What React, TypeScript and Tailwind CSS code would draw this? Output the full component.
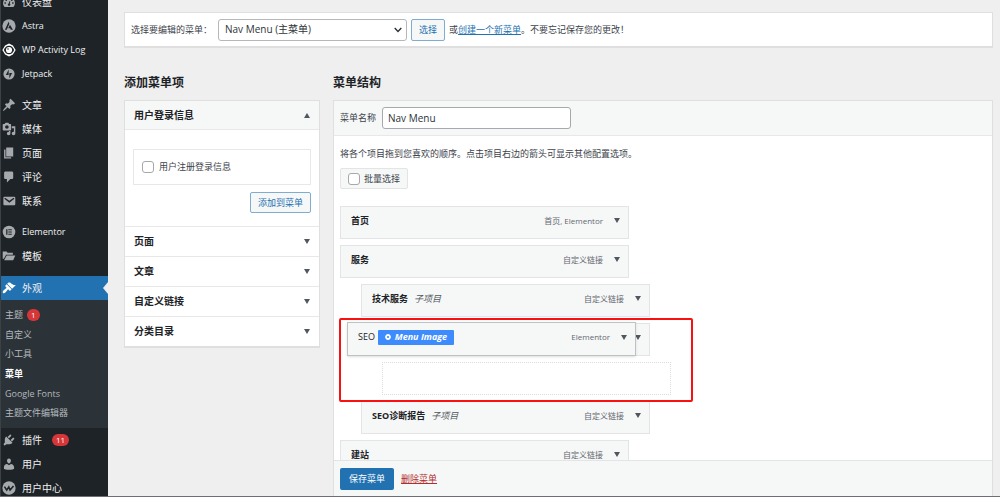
import { ReactNode } from "react";

interface INavItem {
    label: string;
    icon: ReactNode;
    badge?: number;
    active?: boolean;
}

interface IMenuItem {
    title: string;
    type: string;
    sub?: boolean;
}

const Icon = ({ d, children }: { d?: string; children?: ReactNode }) => (
    <svg viewBox="0 0 20 20" className="h-[14px] w-[14px] shrink-0" fill="currentColor" aria-hidden="true">
        {d && <path fillRule="evenodd" d={d} />}
        {children}
    </svg>
);

const icons = {
    dashboard: (
        <Icon d="M3.8 17h12.4c.3 0 .6-.2.7-.4A8.5 8.5 0 1 0 3.1 16.6c.1.2.4.4.7.4zM9 4.5h2v2H9zM5 6.5h2v2H5zM13 6.5h2v2h-2zM3.5 10.5h2v2h-2zM14.5 10.5h2v2h-2zM10.8 8.5l1 .3-.6 3.6a1.7 1.7 0 1 1-1.6-.3z" />
    ),
    astra: (
        <Icon>
            <circle cx="10" cy="10" r="9.5" />
            <path fill="#1d2327" d="M9.4 3.8L4.2 15.2h2.6l3.7-8.4zM11.4 8.2l-2.5 5h2.7l.9 2h3.1z" />
        </Icon>
    ),
    activity: (
        <Icon>
            <path fill="#fff" d="M10 .8l5.6 2.8 3.9 6.4-3.9 6.4L10 19.2l-5.6-2.8L.5 10l3.9-6.4z" />
            <path fill="#1d2327" d="M10 3.8c3.4 0 5.8 2.200 7.400 6.200-1.600 4-4 6.200-7.400 6.200S4.200 14 2.600 10C4.200 6 6.600 3.800 10 3.800z" />
            <circle cx="10" cy="10" r="4.400" fill="#fff" />
            <circle cx="8.600" cy="8.500" r="1.100" fill="#1d2327" />
        </Icon>
    ),
    jetpack: (
        <Icon>
            <circle cx="10" cy="10" r="8" />
            <path fill="#1d2327" d="M9.500 3.600v7.700H5.600zM10.500 16.400V8.700h3.900z" />
        </Icon>
    ),
    post: (
        <Icon d="M10.440 3.020l1.820-1.820 6.360 6.350-1.830 1.820c-1.050-.680-2.480-.570-3.410.360l-.750.750c-.920.930-1.040 2.350-.350 3.410l-1.830 1.820-2.410-2.410-2.800 2.790c-.420.420-3.380 2.710-3.800 2.290s1.860-3.390 2.280-3.810l2.790-2.790L4.100 9.360l1.830-1.820c1.050.690 2.480.570 3.400-.360l.750-.750c.930-.920 1.050-2.350.360-3.410z" />
    ),
    media: (
        <Icon d="M13 11V4c0-.55-.45-1-1-1h-1.670L9 1H5L3.670 3H2c-.55 0-1 .45-1 1v7c0 .55.45 1 1 1h10c.55 0 1-.45 1-1zM7 4.500c1.380 0 2.500 1.120 2.500 2.500S8.380 9.500 7 9.500 4.500 8.380 4.500 7 5.620 4.500 7 4.500zM14 6h5v10.500c0 1.380-1.120 2.500-2.500 2.500S14 17.880 14 16.500s1.120-2.500 2.500-2.500c.17 0 .34.02.5.05V9h-3V6zm-4 8.050V13h2v3.500c0 1.380-1.120 2.500-2.500 2.500S7 17.880 7 16.500 8.120 14 9.500 14c.17 0 .34.02.5.05z" />
    ),
    page: <Icon d="M6 15V2h10v13H6zm-1 1h8v2H3V5h2v11z" />,
    comments: <Icon d="M5 2h9c1.100 0 2 .9 2 2v7c0 1.100-.9 2-2 2h-2l-5 5v-5H5c-1.100 0-2-.9-2-2V4c0-1.100.9-2 2-2z" />,
    email: (
        <Icon d="M3.870 4h13.250C18.370 4 19 4.590 19 5.790v8.420c0 1.190-.63 1.790-1.880 1.790H3.870c-1.250 0-1.880-.6-1.880-1.790V5.790c0-1.200.63-1.790 1.880-1.790zm6.620 8.600l6.740-5.530c.24-.2.43-.66.13-1.070-.29-.41-.82-.42-1.170-.17l-5.700 3.860L4.800 5.830c-.35-.25-.88-.24-1.170.17-.3.41-.11.87.13 1.070z" />
    ),
    elementor: (
        <Icon>
            <circle cx="10" cy="10" r="9" />
            <path fill="#1d2327" d="M6 6h1.800v8H6zM9 6h5v1.600H9zM9 9.200h5v1.600H9zM9 12.400h5V14H9z" />
        </Icon>
    ),
    folder: <Icon d="M1 3.500h5.500L8 5.500h7.500v2.700H5.800L2.700 14H1zM6.600 9.300H19L16 16H3z" />,
    appearance: (
        <Icon d="M14.480 11.060L7.410 3.990l1.500-1.500c.5-.56 2.300-.47 3.510.32 1.210.8 1.430 1.280 2.910 2.100 1.180.64 2.450 1.260 4.450.85zm-.71.71L6.700 4.700 4.930 6.470c-.39.39-.39 1.020 0 1.410l1.060 1.060c.39.39.39 1.030 0 1.420-.6.6-1.430 1.110-2.210 1.690-.35.26-.7.53-1.010.84C1.430 14.230.4 16.080 1.400 17.070c.99 1 2.840-.03 4.180-1.360.31-.31.58-.66.85-1.020.57-.78 1.080-1.610 1.690-2.210.39-.39 1.020-.39 1.410 0l1.060 1.060c.39.39 1.020.39 1.410 0z" />
    ),
    plugins: (
        <Icon d="M13.110 4.360L9.870 7.600 8 5.730l3.240-3.240c.35-.34 1.050-.2 1.560.32.52.51.66 1.210.31 1.550zm-8 1.770l.91-1.120 9.010 9.010-1.190.84c-.71.71-2.630 1.160-3.820 1.160H6.140L4.900 17.260c-.59.59-1.540.59-2.120 0-.59-.58-.59-1.530 0-2.120l1.240-1.240v-3.880c0-1.130.4-3.190 1.090-3.890zm7.260 3.970l3.240-3.240c.34-.35 1.040-.21 1.550.31.52.51.66 1.210.31 1.550l-3.240 3.250z" />
    ),
    users: (
        <Icon d="M10 9.250c-2.270 0-2.730-3.440-2.730-3.440C7 4.020 7.820 2 9.970 2c2.160 0 2.980 2.020 2.710 3.810 0 0-.41 3.440-2.680 3.440zm0 2.570L12.720 10c2.390 0 4.520 2.330 4.520 4.530v2.490s-3.650 1.130-7.240 1.130c-3.650 0-7.240-1.130-7.240-1.130v-2.490c0-2.250 1.940-4.480 4.470-4.480z" />
    ),
    member: (
        <Icon>
            <circle cx="10" cy="10" r="9.500" />
            <path fill="none" stroke="#1d2327" strokeWidth="2.200" d="M3.500 8l3.200 5 3-4.500 1.800 4.500L16.500 7" />
        </Icon>
    ),
};

const navGroups: INavItem[][] = [
    [
        { label: "仪表盘", icon: icons.dashboard },
        { label: "Astra", icon: icons.astra },
        { label: "WP Activity Log", icon: icons.activity },
        { label: "Jetpack", icon: icons.jetpack },
    ],
    [
        { label: "文章", icon: icons.post },
        { label: "媒体", icon: icons.media },
        { label: "页面", icon: icons.page },
        { label: "评论", icon: icons.comments },
        { label: "联系", icon: icons.email },
    ],
    [
        { label: "Elementor", icon: icons.elementor },
        { label: "模板", icon: icons.folder },
    ],
];

const bottomNav: INavItem[] = [
    { label: "插件", icon: icons.plugins, badge: 11 },
    { label: "用户", icon: icons.users },
    { label: "用户中心", icon: icons.member },
];

const subNav = ["主题", "自定义", "小工具", "菜单", "Google Fonts", "主题文件编辑器"];

const closedPanels = ["页面", "文章", "自定义链接", "分类目录"];

const Badge = ({ count }: { count: number }) => (
    <span className="ml-1 flex h-3 min-w-3 items-center justify-center rounded-full bg-[#d63638] px-1 text-[8px] leading-none text-white">
        {count}
    </span>
);

const Arrow = ({ up }: { up?: boolean }) => (
    <svg viewBox="0 0 6 5" className="h-[5px] w-[6px] shrink-0" fill="#50575e" aria-hidden="true">
        <path d={up ? "M3 0l3 5H0z" : "M0 0h6L3 5z"} />
    </svg>
);

const NavLink = ({ item }: { item: INavItem }) => (
    <li className={item.active ? "relative bg-[#2271b1]" : ""}>
        <a href="#" className="flex h-6 items-center gap-[6px] pl-[1px] text-[#f0f0f1]">
            <span className={item.active ? "text-white" : "text-[#a7aaad]"}>{item.icon}</span>
            <span className={/^[A-Z]/.test(item.label) ? "text-[9px]" : "text-[10px]"}>{item.label}</span>
            {item.badge && <Badge count={item.badge} />}
        </a>
        {item.active && (
            <span className="absolute top-[6px] right-0 border-y-[6px] border-r-[5px] border-y-transparent border-r-[#efefef]" />
        )}
    </li>
);

function Sidebar() {
    return (
        <nav className="w-[108px] shrink-0 overflow-hidden border-l border-[#3c4146] bg-[#1d2327]">
            {/* scrolled a little, first row is cut */}
            <div className="-mt-[10px]">
                {navGroups.map((group, i) => (
                    <ul key={i} className="mb-[7px]">
                        {group.map((item) => (
                            <NavLink key={item.label} item={item} />
                        ))}
                    </ul>
                ))}
                <ul className="mt-2">
                    <NavLink item={{ label: "外观", icon: icons.appearance, active: true }} />
                </ul>
                <ul className="flex h-32 flex-col bg-[#2c3338] py-[5px]">
                    {subNav.map((label) => (
                        <li key={label} className="flex flex-1 items-center">
                            <a
                                href="#"
                                className={
                                    label === "菜单"
                                        ? "flex items-center pl-1 font-bold text-white"
                                        : "flex items-center pl-1 text-[#b4b9be]"
                                }
                            >
                                {label}
                                {label === "主题" && <Badge count={1} />}
                            </a>
                        </li>
                    ))}
                </ul>
                <ul>
                    {bottomNav.map((item) => (
                        <NavLink key={item.label} item={item} />
                    ))}
                </ul>
            </div>
        </nav>
    );
}

function MenuSelect() {
    return (
        <form className="flex h-9 items-center border border-b-2 border-[#dfdfe0] bg-white px-[6px]">
            <label htmlFor="menu" className="mr-[6px]">
                选择要编辑的菜单：
            </label>
            <div className="relative">
                <select
                    id="menu"
                    className="h-[22px] w-[189px] appearance-none rounded-[3px] border border-[#b5b7ba] bg-white px-[6px] text-[10px] text-[#2c3338]"
                >
                    <option>Nav Menu (主菜单)</option>
                </select>
                <svg
                    viewBox="0 0 8 6"
                    className="pointer-events-none absolute top-2 right-[5px] h-[6px] w-2"
                    fill="none"
                    stroke="#2c3338"
                    strokeWidth="1.400"
                    aria-hidden="true"
                >
                    <path d="M.7 1L4 4.500 7.300 1" />
                </svg>
            </div>
            <button
                type="button"
                className="mx-1 h-[22px] rounded-[2px] border border-[#7fadd2] bg-[#f6f7f7] px-[7px] text-[#2271b1]"
            >
                选择
            </button>
            <span>
                或
                <a href="#" className="text-[#2271b1] underline">
                    创建一个新菜单
                </a>
                。不要忘记保存您的更改！
            </span>
        </form>
    );
}

function AddItems() {
    return (
        <section className="w-[196px] shrink-0">
            <h2 className="mb-2 text-[12px] leading-[18px] font-bold text-[#1d2327]">添加菜单项</h2>
            <div className="border border-b-2 border-[#dfdfe0] bg-white">
                <button
                    type="button"
                    className="flex h-[29px] w-full items-center justify-between border-b border-[#e8e8e9] bg-[#f6f7f7] px-[9px] text-[10px] font-bold text-[#1d2327]"
                >
                    用户登录信息
                    <Arrow up />
                </button>
                <div className="flex flex-col items-end px-2 pt-[19px] pb-[13px]">
                    <div className="flex h-9 w-full items-center border border-[#e8e8e9] px-2">
                        <label className="flex items-center gap-[5px]">
                            <input
                                type="checkbox"
                                className="h-3 w-3 appearance-none rounded-[3px] border border-[#a5a8ac] bg-white"
                            />
                            用户注册登录信息
                        </label>
                    </div>
                    <button
                        type="button"
                        className="mt-[7px] h-[21px] rounded-[2px] border border-[#7fadd2] bg-[#f6f7f7] px-[7px] text-[#2271b1]"
                    >
                        添加到菜单
                    </button>
                </div>
                {closedPanels.map((title) => (
                    <button
                        key={title}
                        type="button"
                        className="flex h-[30px] w-full items-center justify-between border-t border-[#e8e8e9] px-[9px] text-[10px] font-bold text-[#1d2327]"
                    >
                        {title}
                        <Arrow />
                    </button>
                ))}
            </div>
        </section>
    );
}

const MenuItem = ({ title, type, sub }: IMenuItem) => (
    <li
        className={
            sub
                ? "ml-[21px] flex h-[33px] w-[289px] items-center border border-[#e3e4e5] bg-[#f6f7f7] pr-2 pb-1 pl-[10px]"
                : "flex h-[33px] w-[289px] items-center border border-[#e3e4e5] bg-[#f6f7f7] pr-2 pb-1 pl-[10px]"
        }
    >
        <span className="font-bold text-[#1d2327]">{title}</span>
        {sub && <i className="ml-[6px] text-[#50575e]">子项目</i>}
        <span className="mr-[11px] ml-auto text-[8px] text-[#646970]">{type}</span>
        <button type="button" aria-label={title}>
            <Arrow />
        </button>
    </li>
);

// item that is being dragged, its old row stays below it
const DraggedItem = () => (
    <li className="relative ml-[21px] flex h-[33px] w-[289px] items-center justify-end border border-[#e3e4e5] bg-[#f6f7f7] pr-2 pb-1">
        <Arrow />
        <div className="absolute -top-[2px] -left-[15px] flex h-[34px] w-[289px] items-center border border-[#bfc1c4] bg-[#f6f7f7] pr-2 pb-1 pl-[10px] shadow-sm">
            <span className="mr-[3px] text-[#1d2327]">SEO</span>
            <button
                type="button"
                className="flex h-[15px] w-[76px] items-center justify-center gap-1 rounded-[1px] bg-[#3d8bfd] text-[9px] font-bold text-white italic"
            >
                <svg viewBox="0 0 6 6" className="h-[6px] w-[6px]" fill="none" stroke="currentColor" aria-hidden="true">
                    <circle cx="3" cy="3" r="2" strokeWidth="1.800" />
                </svg>
                Menu Image
            </button>
            <span className="mr-[11px] ml-auto text-[8px] text-[#646970]">Elementor</span>
            <button type="button" aria-label="SEO">
                <Arrow />
            </button>
        </div>
        <div className="pointer-events-none absolute -top-[6px] -left-[23px] h-[84px] w-[354px] rounded-[2px] border-2 border-[#fb1010]" />
    </li>
);

function MenuStructure() {
    return (
        <section className="flex min-w-0 flex-1 flex-col">
            <h2 className="mb-2 text-[12px] leading-[18px] font-bold text-[#1d2327]">菜单结构</h2>
            <form className="flex min-h-0 flex-1 flex-col border border-b-0 border-[#dfdfe0] bg-white">
                <div className="flex h-[35px] shrink-0 items-center gap-[6px] border-b border-[#e8e8e9] bg-[#f6f7f7] px-[6px]">
                    <label htmlFor="menu-name">菜单名称</label>
                    <input
                        id="menu-name"
                        type="text"
                        defaultValue="Nav Menu"
                        className="h-[22px] w-[189px] rounded-[3px] border border-[#a5a8ac] bg-white px-[5px] text-[10px] text-[#2c3338]"
                    />
                </div>
                <div className="min-h-0 flex-1 overflow-hidden px-[6px] pt-[10px]">
                    <p className="leading-4">将各个项目拖到您喜欢的顺序。点击项目右边的箭头可显示其他配置选项。</p>
                    <label className="mt-[6px] flex h-[21px] w-fit items-center gap-1 rounded-[2px] border border-[#e3e4e5] bg-[#f6f7f7] px-[7px]">
                        <input
                            type="checkbox"
                            className="h-3 w-3 appearance-none rounded-[3px] border border-[#a5a8ac] bg-white"
                        />
                        批量选择
                    </label>
                    <ul className="mt-[17px] flex flex-col gap-[6px]">
                        <MenuItem title="首页" type="首页, Elementor" />
                        <MenuItem title="服务" type="自定义链接" />
                        <MenuItem title="技术服务" type="自定义链接" sub />
                        <DraggedItem />
                        <li className="ml-[42px] h-[33px] w-[289px] border border-dotted border-[#dcdcde]" />
                        <MenuItem title="SEO诊断报告" type="自定义链接" sub />
                        <MenuItem title="建站" type="自定义链接" />
                    </ul>
                </div>
                <div className="z-10 flex h-9 shrink-0 items-center gap-[7px] border-t border-[#e3e4e5] bg-[#f6f7f7] px-[6px]">
                    <button type="button" className="h-[22px] rounded-[2px] bg-[#2271b1] px-[9px] text-white">
                        保存菜单
                    </button>
                    <a href="#" className="text-[#b32d2e] underline">
                        删除菜单
                    </a>
                </div>
            </form>
        </section>
    );
}

function App() {
    return (
        <div className="flex h-screen overflow-hidden border-b border-[#6c6f73] bg-[#efefef] font-['Open_Sans','Noto_Sans_CJK_SC',sans-serif] text-[9px] text-[#3c434a]">
            <Sidebar />
            <main className="flex min-w-0 flex-1 flex-col pt-3 pr-[7px] pl-4">
                <MenuSelect />
                <div className="mt-[26px] flex min-h-0 flex-1 gap-[13px]">
                    <AddItems />
                    <MenuStructure />
                </div>
            </main>
        </div>
    );
}

export default App;
